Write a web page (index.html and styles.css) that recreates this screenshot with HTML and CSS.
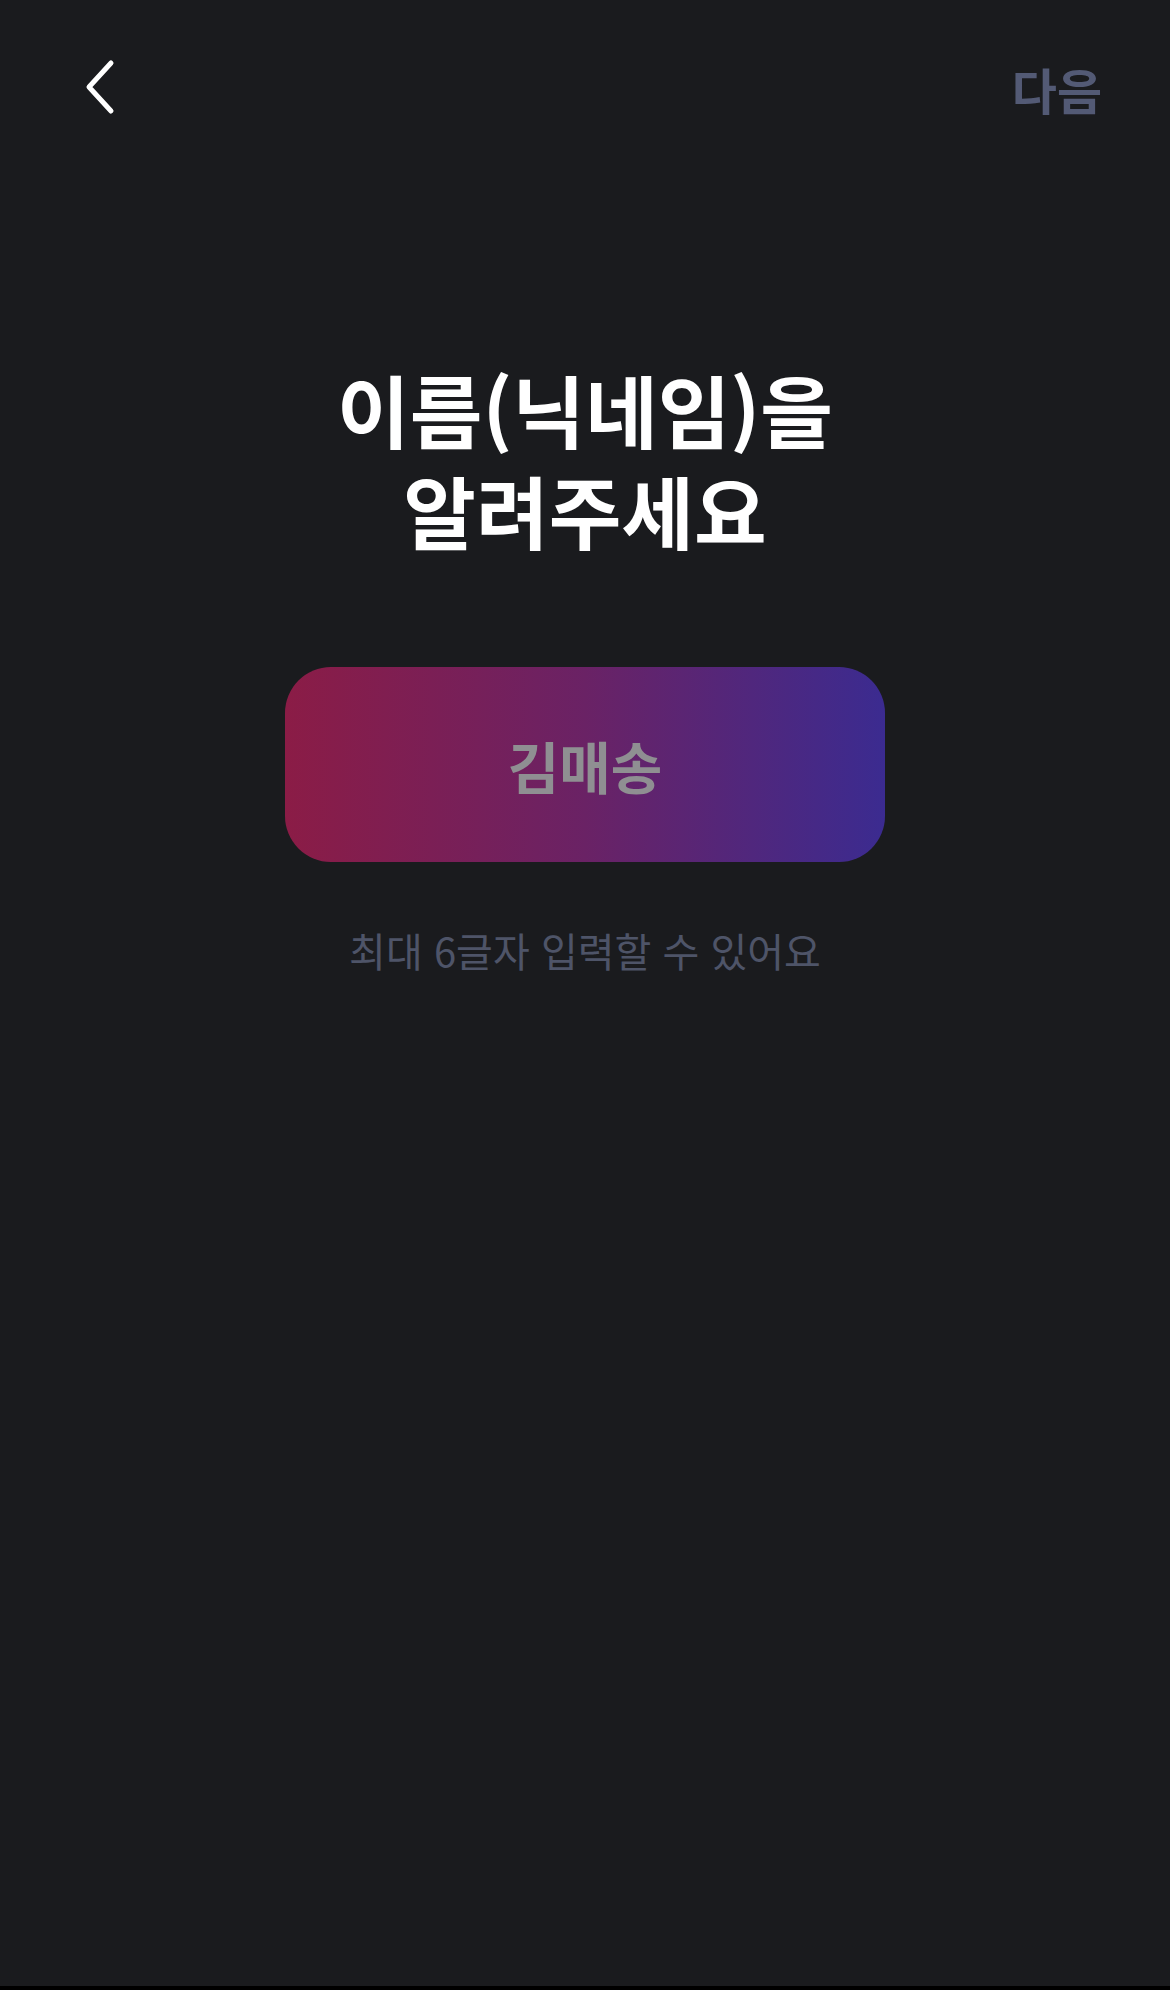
FILE: index.html
```html
<!DOCTYPE html>
<html lang="ko">
<head>
<meta charset="utf-8">
<link rel="stylesheet" href="styles.css">
</head>
<body>
<div class="screen">
  <header class="topbar">
    <button class="back" aria-label="뒤로">
      <svg width="40" height="60" viewBox="0 0 40 60"><path d="M28 5 L6 29 L28 53" fill="none" stroke="#ffffff" stroke-width="5" stroke-linecap="round" stroke-linejoin="round"/></svg>
    </button>
    <span class="next">다음</span>
  </header>
  <main class="content">
    <h1 class="title"><span class="line">이름(닉네임)을</span><span class="line">알려주세요</span></h1>
    <div class="name-box"><span class="name">김매송</span></div>
    <p class="hint">최대 6글자 입력할 수 있어요</p>
  </main>
</div>
</body>
</html>
```
FILE: styles.css
```css
html, body {
  margin: 0;
  padding: 0;
  background: #1a1b1e;
}
body {
  font-family: "Noto Sans CJK KR", "Noto Sans", sans-serif;
  width: 1170px;
  height: 1990px;
  overflow: hidden;
}
.screen {
  height: 1986px;
  background: #1a1b1e;
  border-bottom: 4px solid #000;
}
.topbar {
  display: flex;
  justify-content: space-between;
  align-items: center;
  height: 170px;
  padding: 6px 68px 0 83px;
  box-sizing: border-box;
}
.back {
  background: none;
  border: 0;
  padding: 0;
  width: 40px;
  height: 60px;
  display: flex;
}
.next {
  color: #535a75;
  font-size: 49px;
  font-weight: 700;
}
.content {
  display: flex;
  flex-direction: column;
  align-items: center;
}
.title {
  margin: 188px 0 0;
  color: #ffffff;
  font-size: 79px;
  font-weight: 700;
  line-height: 101px;
  text-align: center;
}
.line {
  display: block;
}
.name-box {
  margin-top: 107px;
  width: 600px;
  height: 195px;
  border-radius: 46px;
  background: linear-gradient(90deg, #8b1c46 0%, #6a2265 50%, #3b2b90 100%);
  display: flex;
  align-items: center;
  justify-content: center;
}
.name {
  color: #8f8f92;
  font-size: 56px;
  font-weight: 700;
}
.hint {
  margin: 59px 0 0;
  color: #4e5468;
  font-size: 40px;
  font-weight: 400;
}
```
